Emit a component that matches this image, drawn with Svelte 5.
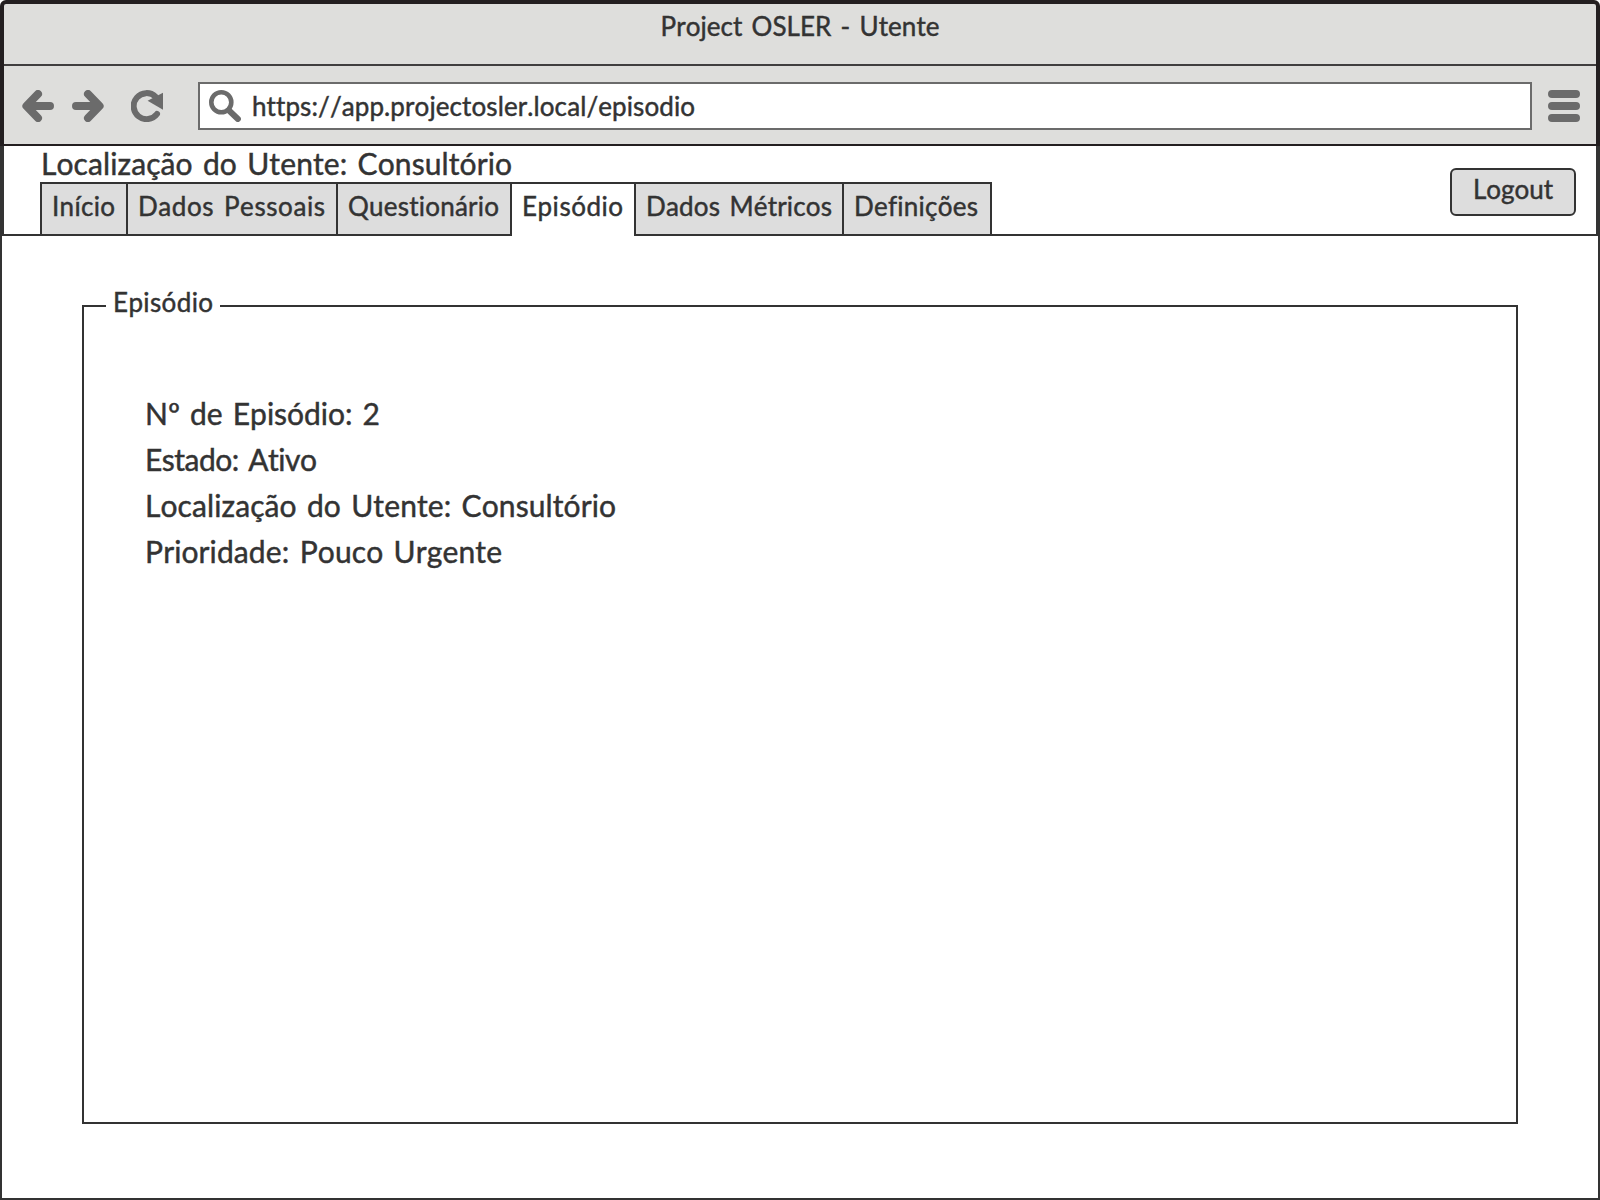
<script>
  const tabs = [
    { label: 'Início', size: 84, text: 63 },
    { label: 'Dados Pessoais', size: 208, text: 187 },
    { label: 'Questionário', size: 172, text: 151 },
    { label: 'Episódio', size: 122, text: 101, active: true },
    { label: 'Dados Métricos', size: 206, text: 186 },
    { label: 'Definições', size: 146, text: 124 },
  ];

  const details = [
    { text: 'Nº de Episódio: 2', width: 235 },
    { text: 'Estado: Ativo', width: 172 },
    { text: 'Localização do Utente: Consultório', width: 471 },
    { text: 'Prioridade: Pouco Urgente', width: 357 },
  ];

  // Spreads the letters of a single-line label over the given width.
  function fit(node, width) {
    const natural = node.getBoundingClientRect().width;
    const gap = (width - natural) / (node.textContent.length - 1);
    node.style.letterSpacing = `${gap}px`;
    node.style.marginRight = `${-gap}px`;
  }
</script>

<div class="window">
  <header class="chrome">
    <div class="titlebar"><span use:fit={279}>Project OSLER - Utente</span></div>
    <div class="toolbar">
      <svg class="back" width="32" height="32" viewBox="0 0 32 32">
        <path d="M16 4 4.4 16 16 28M6 16h22" />
      </svg>
      <svg class="forward" width="32" height="32" viewBox="0 0 32 32">
        <path d="M16 4 27.6 16 16 28M26 16H4" />
      </svg>
      <svg class="reload" width="32" height="32" viewBox="0 0 32 32">
        <path class="ring" d="M24.5 6.6A13 13 0 1 0 26 24" />
        <path class="head" d="M32 2.8v17L16.6 10.8z" />
      </svg>
      <div class="address">
        <svg width="32" height="32" viewBox="0 0 32 32">
          <circle cx="12.3" cy="12.3" r="10" />
          <path d="M20 20.5 28.9 29" />
        </svg>
        <span use:fit={443}>https://app.projectosler.local/episodio</span>
      </div>
      <svg class="menu" width="32" height="32" viewBox="0 0 32 32">
        <path d="M4 4h24M4 16h24M4 28h24" />
      </svg>
    </div>
  </header>

  <div class="top">
    <div class="left">
      <div class="location"><span use:fit={471}>Localização do Utente: Consultório</span></div>
      <nav>
        {#each tabs as tab}
          <div class="tab" class:active={tab.active} style:width="{tab.size}px">
            <span use:fit={tab.text}>{tab.label}</span>
          </div>
        {/each}
        <div class="rest"></div>
      </nav>
    </div>
    <button><span use:fit={80}>Logout</span></button>
  </div>

  <main>
    <fieldset>
      <legend><span use:fit={100}>Episódio</span></legend>
      <div class="details">
        {#each details as row}
          <p><span use:fit={row.width}>{row.text}</span></p>
        {/each}
      </div>
    </fieldset>
  </main>
</div>

<style>
  :global(body) {
    margin: 0;
    background: #fff;
  }
  .window {
    box-sizing: border-box;
    width: 1600px;
    height: 1200px;
    display: flex;
    flex-direction: column;
    overflow: hidden;
    color: #333;
    font: 26px/26px Lato, 'Open Sans', sans-serif;
    -webkit-text-stroke: 0.45px #333;
    word-spacing: 2.5px;
    white-space: nowrap;
    font-variant-ligatures: none;
    font-kerning: none;
  }
  span {
    display: inline-block;
  }
  .chrome {
    box-sizing: border-box;
    height: 146px;
    border: 4px solid #231f20;
    border-bottom-width: 2px;
    border-radius: 6px 6px 0 0;
    background: #dededc;
  }
  .titlebar {
    box-sizing: border-box;
    height: 62px;
    padding-top: 9px;
    border-bottom: 2px solid #403e3f;
    text-align: center;
  }
  .toolbar {
    box-sizing: border-box;
    display: flex;
    align-items: center;
    height: 78px;
    padding: 2px 16px 0 18px;
  }
  svg {
    flex: none;
    fill: none;
    stroke: #6b6b6b;
    stroke-width: 8;
    stroke-linecap: round;
    stroke-linejoin: round;
  }
  .forward {
    margin-left: 18px;
  }
  .reload {
    margin: 0 35px 0 27px;
  }
  .ring {
    stroke-width: 6;
  }
  .head {
    fill: #6b6b6b;
    stroke: none;
  }
  .address {
    box-sizing: border-box;
    display: flex;
    flex: 1;
    height: 48px;
    margin-right: 16px;
    border: 2px solid #6b6b6b;
    background: #fff;
  }
  .address svg {
    margin: 6px 11px 0 9px;
    stroke-width: 4.6;
  }
  .address path {
    stroke-width: 6;
  }
  .address span {
    margin-top: 9px;
  }
  .top {
    box-sizing: border-box;
    display: flex;
    height: 90px;
    border: solid #333;
    border-width: 0 4px;
  }
  .left {
    flex: 1;
    display: flex;
    flex-direction: column;
    margin-right: -146px;
  }
  .location {
    height: 36px;
    padding-left: 37px;
    font-size: 30px;
    line-height: 34px;
  }
  nav {
    display: flex;
    height: 54px;
  }
  nav::before {
    content: '';
    width: 36px;
    border-bottom: 2px solid #333;
  }
  .tab {
    height: 50px;
    border: solid #333;
    border-width: 2px 0 2px 2px;
    background: #ddd;
    text-indent: 10px;
  }
  .tab span {
    margin-top: 9px;
    text-indent: 0;
  }
  .tab.active {
    height: 52px;
    border-bottom: 0;
    background: #fff;
  }
  .rest {
    flex: 1;
    border-left: 2px solid #333;
    border-bottom: 2px solid #333;
  }
  button {
    box-sizing: border-box;
    width: 126px;
    height: 48px;
    margin: 22px 20px 0 0;
    padding: 0 0 6px;
    border: 2px solid #333;
    border-radius: 6px;
    background: #ddd;
    color: inherit;
    font: inherit;
    -webkit-text-stroke: inherit;
  }
  main {
    flex: 1;
    display: flex;
    padding: 53px 80px 74px;
    border: solid #333;
    border-width: 0 2px 2px;
  }
  fieldset {
    box-sizing: border-box;
    flex: 1;
    margin: 0;
    padding: 0;
    border: 2px solid #333;
  }
  legend {
    height: 34px;
    margin-left: 22px;
    padding: 0 7px;
  }
  .details {
    padding: 67px 0 0 61px;
    font-size: 30px;
  }
  p {
    height: 46px;
    margin: 0;
    line-height: 46px;
  }
</style>
